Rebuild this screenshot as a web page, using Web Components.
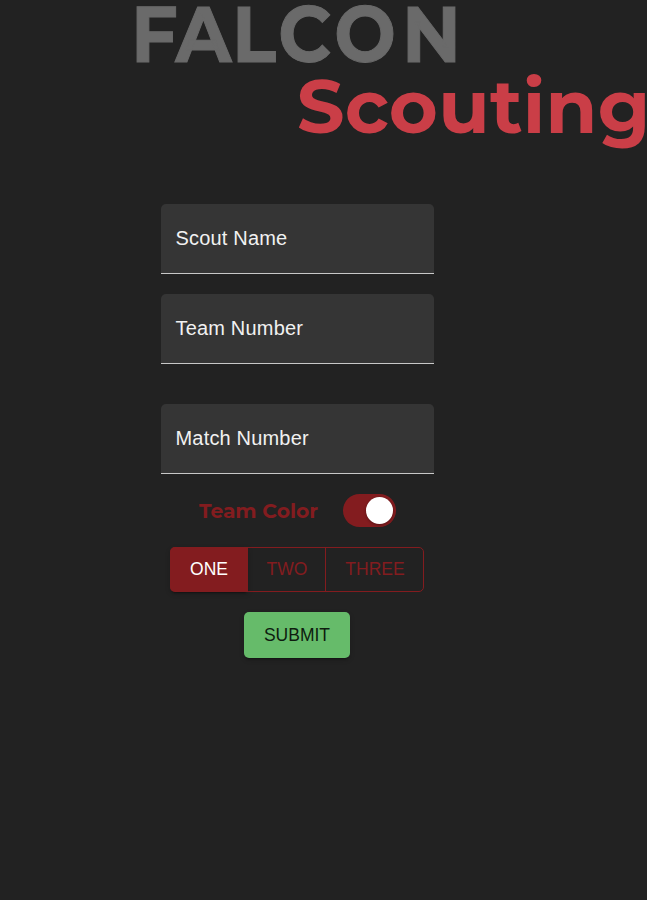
<!DOCTYPE html>
<html lang="en"><head><meta charset="utf-8"><title>Falcon Scouting</title>
<style>
html,body{margin:0;height:100%;background:#222;overflow:hidden}
body{font-family:"Liberation Sans",Arial,sans-serif}
</style></head><body><scout-page></scout-page>
<script>
class Base extends HTMLElement{
  connectedCallback(){this.attachShadow({mode:'open'}).innerHTML=this.view();}
}
customElements.define('falcon-logo',class extends Base{view(){return `<style>
:host{display:block;height:160px}
svg{display:block}
text{font-family:Montserrat,Inter,sans-serif}
</style><svg width="647" height="160" viewBox="0 0 647 160">
<text transform="scale(.93 1)" y="61.7" x="140.8 188.6 249.6 299.3 359.5 432.2" font-size="78.5" font-weight="700" fill="#6a6a6a" stroke="#6a6a6a" stroke-width="1">FALCON</text>
<text y="133" x="296.8" textLength="353.5" font-size="75" font-weight="700" fill="#ca3e47">Scouting</text>
</svg>`}});
customElements.define('text-field',class extends Base{view(){return `<style>
:host{display:flex;align-items:center;box-sizing:border-box;width:273px;height:70px;padding:0 14.5px 2px;background:#353535;border-bottom:1px solid #c8c8c8;border-radius:5px 5px 0 0;color:#f1f1f1;font-size:20px;line-height:28px;letter-spacing:.18px}
</style><span><slot></slot></span>`}});
customElements.define('color-switch',class extends Base{view(){return `<style>
:host{display:flex;align-items:center;height:33px;color:#831c1f}
.label{font:700 20px/33px Montserrat,Inter,sans-serif;width:145px;white-space:nowrap}
.track{box-sizing:border-box;width:53px;height:33px;border-radius:17px;background:#831c1f;padding:3px;display:flex;justify-content:flex-end}
.thumb{width:27px;height:27px;border-radius:50%;background:#fff;box-shadow:0 1px 3px #0005}
svg{display:block;overflow:visible}
</style><div class="label"><svg width="145" height="33"><text x="1" y="24" textLength="119" lengthAdjust="spacingAndGlyphs" fill="currentColor">Team Color</text></svg></div><div class="track"><div class="thumb"></div></div>`}});
customElements.define('position-group',class extends Base{view(){return `<style>
:host{display:flex;box-sizing:border-box;width:254px;height:45px;border:1px solid #831c1f;border-radius:5px;color:#831c1f;font-size:17.5px;line-height:43px;text-align:center}
span{box-sizing:border-box}
.one{width:78px;margin:-1px 0 -1px -1px;line-height:45px;border-radius:5px 0 0 5px;background:#831c1f;color:#fff;box-shadow:0 3px 2px -2px #0005,0 2px 5px #0003}
.two{width:78px;border-right:1px solid #831c1f;padding-left:1px}.three{flex:1;padding-left:1px}
</style><span class="one">ONE</span><span class="two">TWO</span><span class="three">THREE</span>`}});
customElements.define('submit-button',class extends Base{view(){return `<style>
:host{display:block;width:106px;height:46px;border-radius:5px;background:#66bb6a;color:#0e1b0f;font-size:17.5px;line-height:46px;text-align:center;box-shadow:0 3px 2px -2px #0005,0 2px 5px #0003}
</style><slot></slot>`}});
customElements.define('scout-page',class extends Base{view(){return `<style>
:host{display:block;width:647px;height:900px;background:#222}
main{width:273px;margin:44px 0 0 161px;display:flex;flex-direction:column;align-items:center;gap:20px}
.match{margin-top:20px}
color-switch{align-self:flex-start;margin-left:37px}
position-group{align-self:flex-start;margin-left:9px}
submit-button{margin-right:1px}
</style><falcon-logo></falcon-logo><main>
<text-field>Scout Name</text-field><text-field>Team Number</text-field><text-field class="match">Match Number</text-field>
<color-switch></color-switch><position-group></position-group><submit-button>SUBMIT</submit-button></main>`}});
</script></body></html>
